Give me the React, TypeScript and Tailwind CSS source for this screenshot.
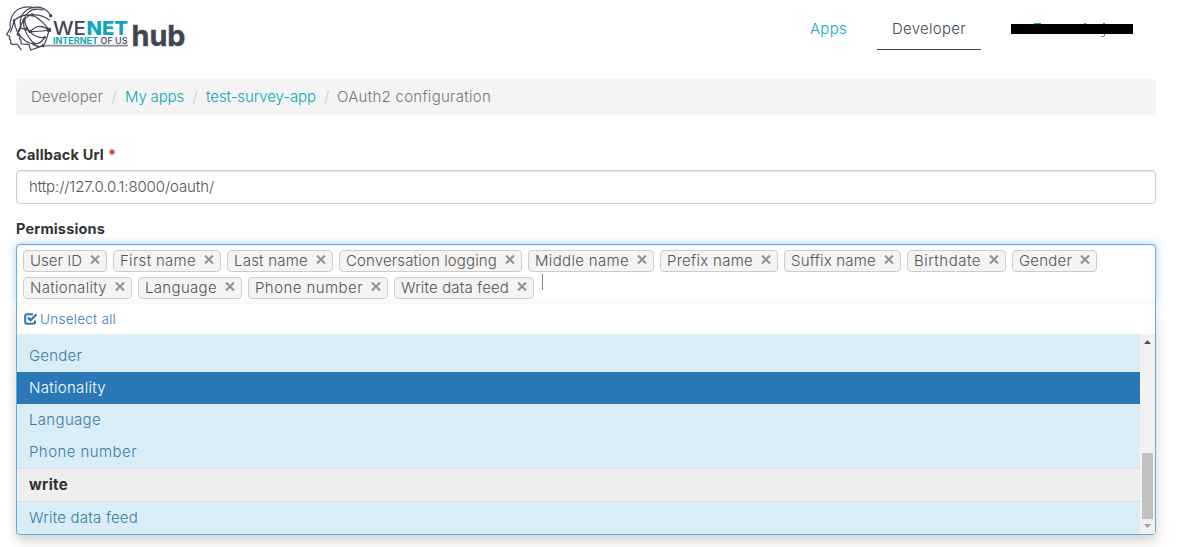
import { useLayoutEffect, useRef } from "react";

/* Sets text to an exact run width by spreading the difference between letters. */
function Fit({ text, w, className = "" }: { text: string; w: number; className?: string }) {
  const ref = useRef<HTMLSpanElement>(null);
  useLayoutEffect(() => {
    const el = ref.current;
    if (!el) return;
    el.style.letterSpacing = "0px";
    el.style.width = "auto";
    const natural = el.getBoundingClientRect().width;
    el.style.letterSpacing = `${(w - natural) / text.length}px`;
    el.style.width = `${w}px`;
  }, [text, w]);
  return <span ref={ref} className={`inline-block shrink-0 whitespace-nowrap ${className}`}>{text}</span>;
}

const rows: [string, number][][] = [
  [["User ID", 52], ["First name", 76], ["Last name", 74], ["Conversation logging", 151], ["Middle name", 94], ["Prefix name", 86], ["Suffix name", 85], ["Birthdate", 67], ["Gender", 53]],
  [["Nationality", 77], ["Language", 72], ["Phone number", 108], ["Write data feed", 108]],
];

function Chip({ label, w }: { label: string; w: number }) {
  return (
    <div className="flex h-[22px] shrink-0 items-center rounded-[4px] border border-[#ccc] bg-[#f4f4f4] pr-[6px] pl-[6px] text-[#555]">
      <Fit text={label} w={w} />
      <svg className="mb-[4px] ml-[8px] shrink-0" width="10" height="9" viewBox="0 0 10 9">
        <path d="M1 .5 9 8.5M9 .5 1 8.5" stroke="#929292" strokeWidth="2.1" />
      </svg>
    </div>
  );
}

function Option({ label, w, active = false }: { label: string; w: number; active?: boolean }) {
  return (
    <div className={`flex h-8 items-center pl-3 ${active ? "bg-[#2a78b5] text-white" : "text-[#3a7d9d]"}`}>
      <Fit text={label} w={w} />
    </div>
  );
}

function Logo() {
  return (
    <svg width="190" height="54" viewBox="0 0 190 54" className="block">
      <g transform="translate(4 4) scale(.3333)">
        <g fill="none" stroke="#414455" strokeWidth="3.6" strokeLinejoin="round" strokeLinecap="round">
          <path d="M92 12C66 4 40 12 28 30C17 46 17 58 19 72L8 92L17 97L16 105L20 108L20 118C24 124 32 119 40 121L51 137" />
          <path d="M140 35C126 8 92 2 68 18C46 34 47 56 50 72L39 92L48 97L47 105L51 109L51 118C56 124 66 118 75 122L80 138L118 125" />
          <path d="M118 18C88 10 68 20 60 48C55 67 66 92 90 120C98 129 108 129 118 125" />
          <path d="M60 48C70 36 76 33 85 33C104 30 122 38 136 48M30 50C46 34 62 31 85 33" />
          <path d="M60 48C64 62 68 73 78 83C99 60 119 65 135 78M85 33C108 45 122 58 135 78" />
          <path d="M78 83C104 82 119 82 135 78C131 96 128 110 118 125M78 83C94 101 109 102 122 100M90 120C106 120 115 112 122 100" />
          <path d="M30 50C33 74 42 96 66 112C73 117 80 119 90 120M30 50C27 65 24 76 19 84M60 48C50 60 47 73 42 84M48 74C59 71 66 76 78 83" />
        </g>
        <g fill="#414455">
          <circle cx="85" cy="33" r="5" /><circle cx="60" cy="48" r="5" /><circle cx="140" cy="35" r="5" /><circle cx="135" cy="78" r="7" />
          <circle cx="78" cy="83" r="5" /><circle cx="68" cy="73" r="4" /><circle cx="90" cy="120" r="5" /><circle cx="122" cy="100" r="4" />
          <circle cx="118" cy="125" r="5" /><circle cx="30" cy="50" r="4" />
        </g>
      </g>
      <path d="M44 45.7H128" stroke="#8b8e99" strokeWidth="1.8" />
      <g fontFamily="Inter, sans-serif" fill="#414455">
        <text x="53" y="34.5" fontSize="19" fontWeight="500" textLength="33" lengthAdjust="spacingAndGlyphs">WE</text>
        <text x="86.5" y="34.5" fontSize="19" fontWeight="800" fill="#0ca7b8" textLength="41.5" lengthAdjust="spacingAndGlyphs">NET</text>
        <text x="53" y="43.5" fontSize="8.5" fontWeight="700" fill="#0ca7b8" textLength="45" lengthAdjust="spacingAndGlyphs">INTERNET</text>
        <text x="100.5" y="43.5" fontSize="8.5" fontWeight="500" textLength="27" lengthAdjust="spacingAndGlyphs">OF US</text>
        <text x="131.5" y="46" fontSize="29" fontWeight="700" stroke="#414455" strokeWidth=".4" textLength="54" lengthAdjust="spacingAndGlyphs">hub</text>
      </g>
    </svg>
  );
}

export default function App() {
  return (
    <div className="flex h-[547px] w-[1177px] flex-col overflow-hidden bg-white font-['Inter',sans-serif] text-[15px] leading-5 font-light text-[#333]">
      <header className="flex h-[79px] items-start justify-between">
        <Logo />
        <nav className="mr-[44px] flex pt-[8px] text-[#0ca7b8]">
          <div className="flex h-[42px] w-[67px] justify-center pt-[11px]"><Fit text="Apps" w={37} /></div>
          <div className="mr-[30px] ml-[15px] flex h-[42px] w-[104px] justify-center border-b border-[#414455] pt-[11px] text-[#414455]"><Fit text="Developer" w={74} /></div>
          <svg width="122" height="16" viewBox="0 0 122 16" className="mt-[14px]">
            <path d="M23 1.5H30M73 1.5H75M92 1.5H94M93.5 12V14L92 14.5H90" stroke="#0ca7b8" fill="none" />
            <path d="M0 2H122V12H0Z" fill="#000" />
          </svg>
        </nav>
      </header>
      <main className="mr-[21px] ml-4">
        <div className="flex h-9 items-center rounded bg-[#f4f4f4] pl-[15px] text-[#777]">
          <Fit text="Developer" w={72} /><span className="w-[22px] text-center text-[#ccc]">/</span>
          <Fit text="My apps" w={59} className="text-[#0ca7b8]" /><span className="w-[22px] text-center text-[#ccc]">/</span>
          <Fit text="test-survey-app" w={110} className="text-[#0ca7b8]" /><span className="w-[21px] text-center text-[#ccc]">/</span>
          <Fit text="OAuth2 configuration" w={154} />
        </div>
        <div className="mt-[30px] flex text-[14.5px] font-bold"><Fit text="Callback Url" w={88} /><span className="ml-1 text-[#c9302c]">*</span></div>
        <div className="mt-[5px] flex h-[34px] items-center rounded border border-[#ccc] pl-3 text-[#555] shadow-[inset_0_1px_1px_rgba(0,0,0,0.075)]"><Fit text="http://127.0.0.1:8000/oauth/" w={185} /></div>
        <div className="mt-[15px] flex text-[14.5px] font-bold"><Fit text="Permissions" w={89} /></div>
        <div className="mt-[5px]">
          <div className="h-[60px] rounded-t border border-b-0 border-[#66afe9] pt-[5px] pl-[6px] shadow-[inset_0_1px_1px_rgba(0,0,0,0.075),0_0_8px_rgba(102,175,233,0.6)]">
            <div className="flex gap-[6px]">{rows[0].map(([t, w]) => <Chip key={t} label={t} w={w} />)}</div>
            <div className="mt-[5px] flex gap-[6px]">{rows[1].map(([t, w]) => <Chip key={t} label={t} w={w} />)}<span className="-mt-[3px] ml-[2px] h-4 w-px bg-[#888]" /></div>
          </div>
          <div className="relative -mt-px h-[232px] rounded-b border border-t-0 border-[#5cade3] bg-white shadow-[0_6px_12px_rgba(0,0,0,0.175)]">
            <div className="flex h-[31px] items-center border-t border-[#f7f7f7] pb-px pl-[7px] text-[13.5px] text-[#337ab7]">
              <svg width="14" height="12" viewBox="0 0 14 12" className="mr-[2px]"><path d="M9 1.2H3.2Q1.2 1.2 1.2 3V9Q1.2 10.8 3.2 10.8H9Q11 10.8 11 9V7.5" fill="none" stroke="#2a78b5" strokeWidth="2" /><path d="M4 4.7 6.6 7.2 12.5 1.3" fill="none" stroke="#2a78b5" strokeWidth="2.3" /></svg>
              <Fit text="Unselect all" w={76} />
            </div>
            <div className="flex h-[200px]">
              <div className="flex-1 rounded-bl bg-[#d9edf7] pt-[6px]">
                <Option label="Gender" w={53} /><Option label="Nationality" w={77} active /><Option label="Language" w={72} /><Option label="Phone number" w={108} />
                <div className="flex h-[34px] items-center border-y border-[#ddd] bg-[#eee] pl-3 font-bold text-[#303030]"><Fit text="write" w={39} /></div>
                <Option label="Write data feed" w={109} />
              </div>
              <div className="flex w-[15px] flex-col items-center bg-[#f1f1f1]">
                <svg width="7" height="4" className="mt-[6px]"><path d="M0 4 3.5 0 7 4Z" fill="#505050" /></svg>
                <div className="mt-[109px] h-[66px] w-[11px] bg-[#c1c1c1]" />
                <svg width="7" height="4" className="mt-[5px]"><path d="M0 0 3.5 4 7 0Z" fill="#a3a3a3" /></svg>
              </div>
            </div>
          </div>
        </div>
      </main>
    </div>
  );
}
